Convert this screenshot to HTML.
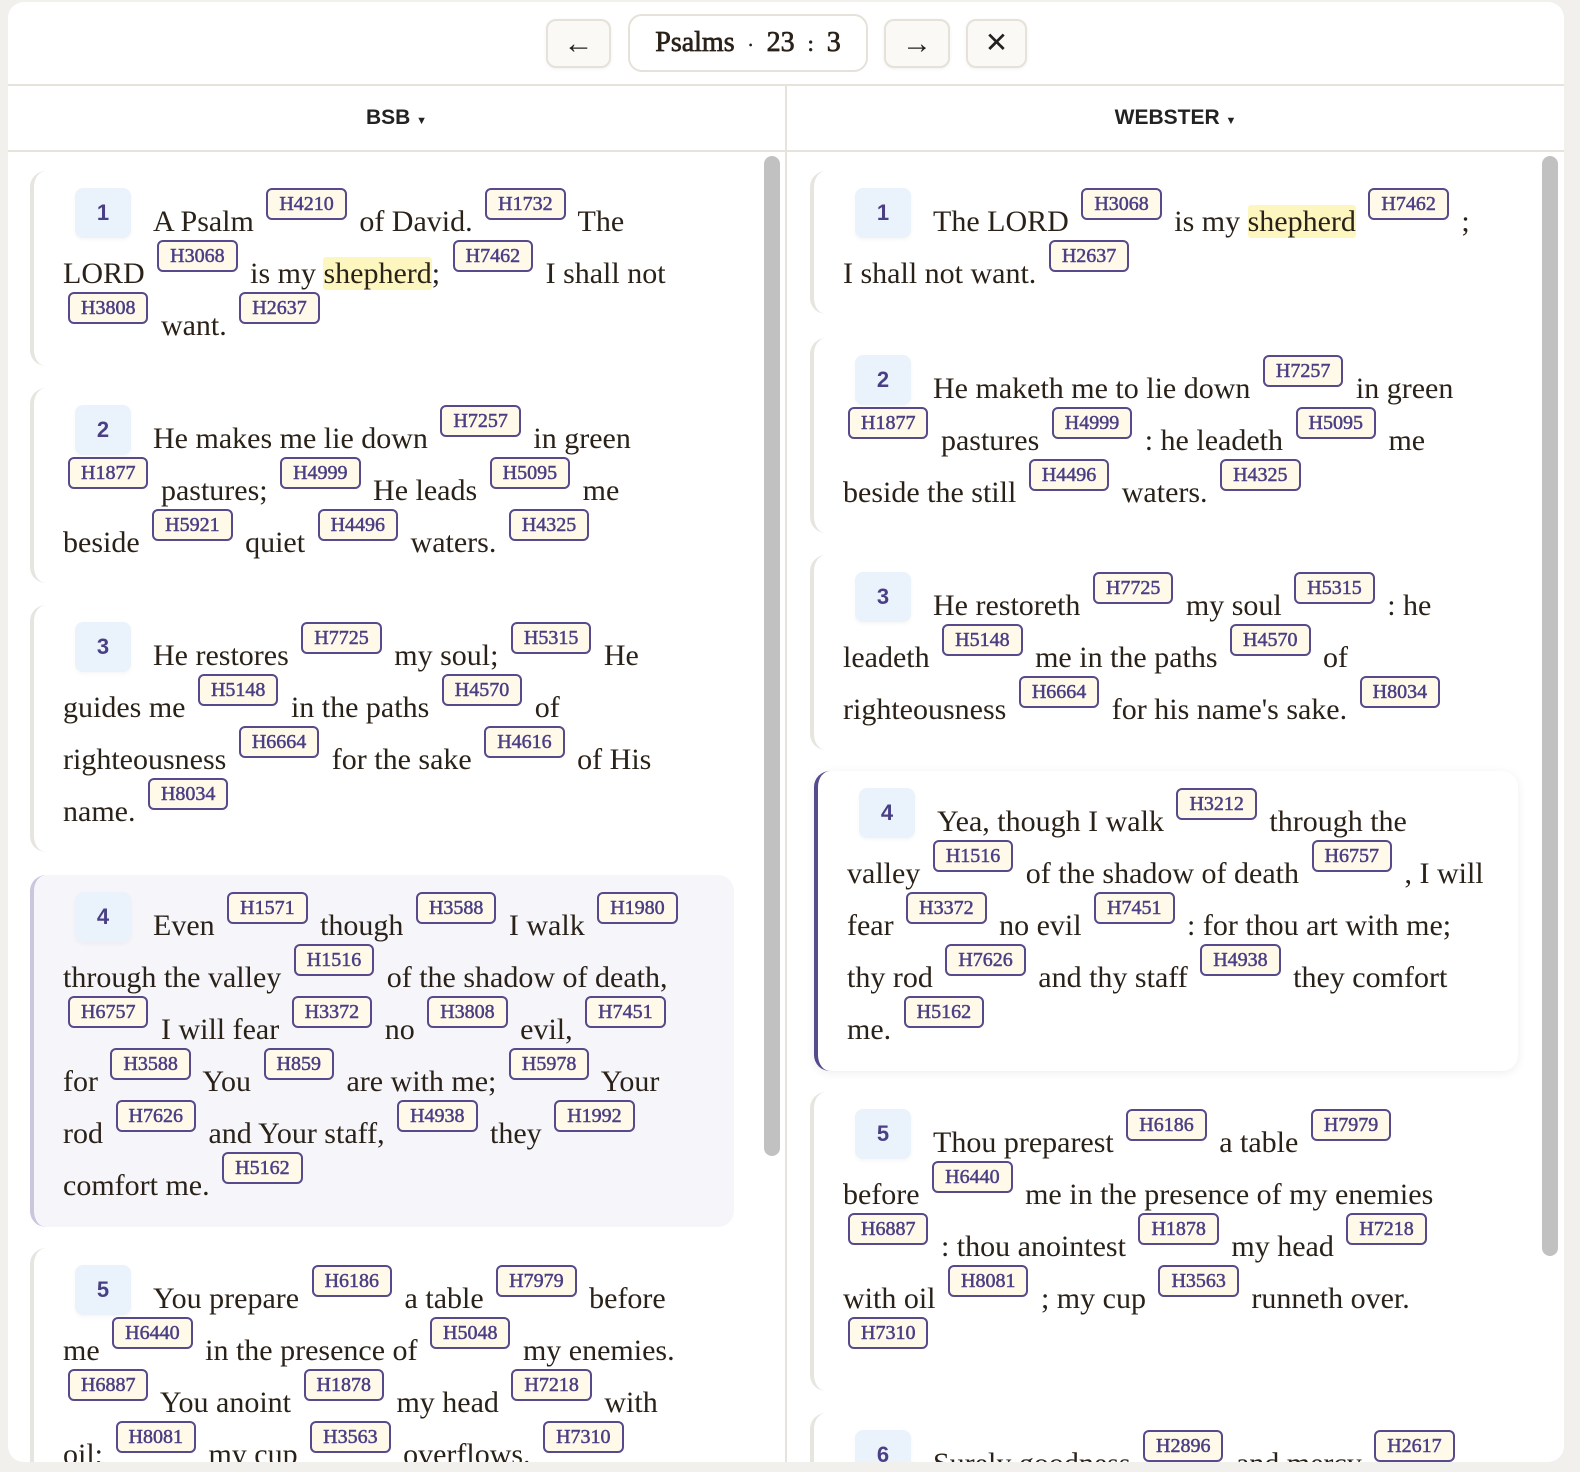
<!DOCTYPE html>
<html><head><meta charset="utf-8"><style>
*{box-sizing:border-box;margin:0;padding:0}
body{width:1580px;height:1472px;background:#f1f0ec;overflow:hidden;font-family:"Liberation Serif",serif;color:#2a2218}
.app{position:absolute;left:8px;top:2px;width:1556px;height:1460px;background:#fff;border-radius:16px;overflow:hidden}
.top{position:absolute;left:0;top:0;width:1556px;height:84px;border-bottom:2px solid #e6e3dd}
.btn{position:absolute;top:17px;height:49px;background:#faf9f6;border:2px solid #e6e2da;border-radius:10px;box-shadow:0 1px 3px rgba(0,0,0,.06);text-align:center;line-height:45px;font-size:30px;color:#222}
.ref{position:absolute;left:620px;top:12px;width:240px;height:58px;border:2px solid #e6e2da;border-radius:14px;text-align:center;line-height:54px;font-size:28px;color:#2a2218;-webkit-text-stroke:.7px #2a2218}
.hdr{position:absolute;top:84px;height:66px;border-bottom:2px solid #e6e3dd;text-align:center;line-height:64px;font-family:"Liberation Sans",sans-serif;font-weight:bold;font-size:21px;color:#222}
.vdiv{position:absolute;left:777px;top:84px;width:2px;height:1380px;background:#e6e3dd}
.sb{position:absolute;width:16px;background:#c1c1c1;border-radius:8px}
.card{position:absolute;border-left:4px solid #e7e5df;border-radius:16px;padding:25px 20px 14px 29px;font-size:30px;line-height:52px;white-space:nowrap}
.act1{background:#f6f6fa;border-left-color:#cac6de}
.act2{background:#fff;border-left-color:#564a8c;box-shadow:0 2px 10px rgba(0,0,0,.07)}
.n{display:inline-block;width:56px;height:50px;line-height:50px;background:#eaf3fb;border-radius:8px;text-align:center;font-family:"Liberation Sans",sans-serif;font-weight:bold;font-size:22px;color:#4a3f85;vertical-align:top;position:relative;top:-8px;margin:0 22px 0 12px;box-shadow:0 2px 4px rgba(0,0,0,.04)}
.t{display:inline-block;height:32px;line-height:28px;padding:0 11px;border:2px solid #564a8c;border-radius:6px;background:#fff9ea;color:#4a3f85;font-size:20px;font-weight:normal;-webkit-text-stroke:.5px #4a3f85;vertical-align:13px;position:relative;top:-8px;margin:0 5px}
.hl{background:#fdf6bf;border-radius:3px}
</style></head><body><div class="app">
<div class="top">
<div class="btn" style="left:538px;width:65px">←</div>
<div class="ref">Psalms <span style="font-size:18px;padding:0 6px">·</span> 23 <span style="padding:0 6px;font-size:22px">:</span> 3</div>
<div class="btn" style="left:876px;width:66px">→</div>
<div class="btn" style="left:958px;width:61px;font-size:28px">✕</div>
</div>
<div class="hdr" style="left:0;width:777px">BSB <span style="font-size:11px">▼</span></div>
<div class="hdr" style="left:779px;width:777px">WEBSTER <span style="font-size:11px">▼</span></div>
<div class="vdiv"></div>
<div class="sb" style="left:756px;top:154px;height:1000px"></div>
<div class="sb" style="left:1534px;top:154px;height:1100px"></div>

<div class="card" style="left:22px;top:169px;width:704px"><span class="n">1</span>A Psalm <b class="t">H4210</b> of David. <b class="t">H1732</b> The<br>LORD <b class="t">H3068</b> is my <span class="hl">shepherd</span>; <b class="t">H7462</b> I shall not<br><b class="t">H3808</b> want. <b class="t">H2637</b></div>
<div class="card" style="left:22px;top:386px;width:704px"><span class="n">2</span>He makes me lie down <b class="t">H7257</b> in green<br><b class="t">H1877</b> pastures; <b class="t">H4999</b> He leads <b class="t">H5095</b> me<br>beside <b class="t">H5921</b> quiet <b class="t">H4496</b> waters. <b class="t">H4325</b></div>
<div class="card" style="left:22px;top:603px;width:704px"><span class="n">3</span>He restores <b class="t">H7725</b> my soul; <b class="t">H5315</b> He<br>guides me <b class="t">H5148</b> in the paths <b class="t">H4570</b> of<br>righteousness <b class="t">H6664</b> for the sake <b class="t">H4616</b> of His<br>name. <b class="t">H8034</b></div>
<div class="card act1" style="left:22px;top:873px;width:704px;height:352px"><span class="n">4</span>Even <b class="t">H1571</b> though <b class="t">H3588</b> I walk <b class="t">H1980</b><br>through the valley <b class="t">H1516</b> of the shadow of death,<br><b class="t">H6757</b> I will fear <b class="t">H3372</b> no <b class="t">H3808</b> evil, <b class="t">H7451</b><br>for <b class="t">H3588</b> You <b class="t">H859</b> are with me; <b class="t">H5978</b> Your<br>rod <b class="t">H7626</b> and Your staff, <b class="t">H4938</b> they <b class="t">H1992</b><br>comfort me. <b class="t">H5162</b></div>
<div class="card" style="left:22px;top:1246px;width:704px"><span class="n">5</span>You prepare <b class="t">H6186</b> a table <b class="t">H7979</b> before<br>me <b class="t">H6440</b> in the presence of <b class="t">H5048</b> my enemies.<br><b class="t">H6887</b> You anoint <b class="t">H1878</b> my head <b class="t">H7218</b> with<br>oil; <b class="t">H8081</b> my cup <b class="t">H3563</b> overflows. <b class="t">H7310</b></div>

<div class="card" style="left:802px;top:169px;width:708px"><span class="n">1</span>The LORD <b class="t">H3068</b> is my <span class="hl">shepherd</span> <b class="t">H7462</b> ;<br>I shall not want. <b class="t">H2637</b></div>
<div class="card" style="left:802px;top:336px;width:708px"><span class="n">2</span>He maketh me to lie down <b class="t">H7257</b> in green<br><b class="t">H1877</b> pastures <b class="t">H4999</b> : he leadeth <b class="t">H5095</b> me<br>beside the still <b class="t">H4496</b> waters. <b class="t">H4325</b></div>
<div class="card" style="left:802px;top:553px;width:708px"><span class="n">3</span>He restoreth <b class="t">H7725</b> my soul <b class="t">H5315</b> : he<br>leadeth <b class="t">H5148</b> me in the paths <b class="t">H4570</b> of<br>righteousness <b class="t">H6664</b> for his name's sake. <b class="t">H8034</b></div>
<div class="card act2" style="left:806px;top:769px;width:704px;height:300px"><span class="n">4</span>Yea, though I walk <b class="t">H3212</b> through the<br>valley <b class="t">H1516</b> of the shadow of death <b class="t">H6757</b> , I will<br>fear <b class="t">H3372</b> no evil <b class="t">H7451</b> : for thou art with me;<br>thy rod <b class="t">H7626</b> and thy staff <b class="t">H4938</b> they comfort<br>me. <b class="t">H5162</b></div>
<div class="card" style="left:802px;top:1090px;width:708px"><span class="n">5</span>Thou preparest <b class="t">H6186</b> a table <b class="t">H7979</b><br>before <b class="t">H6440</b> me in the presence of my enemies<br><b class="t">H6887</b> : thou anointest <b class="t">H1878</b> my head <b class="t">H7218</b><br>with oil <b class="t">H8081</b> ; my cup <b class="t">H3563</b> runneth over.<br><b class="t">H7310</b></div>
<div class="card" style="left:802px;top:1411px;width:708px"><span class="n">6</span>Surely goodness <b class="t">H2896</b> and mercy <b class="t">H2617</b></div>
</div></body></html>
